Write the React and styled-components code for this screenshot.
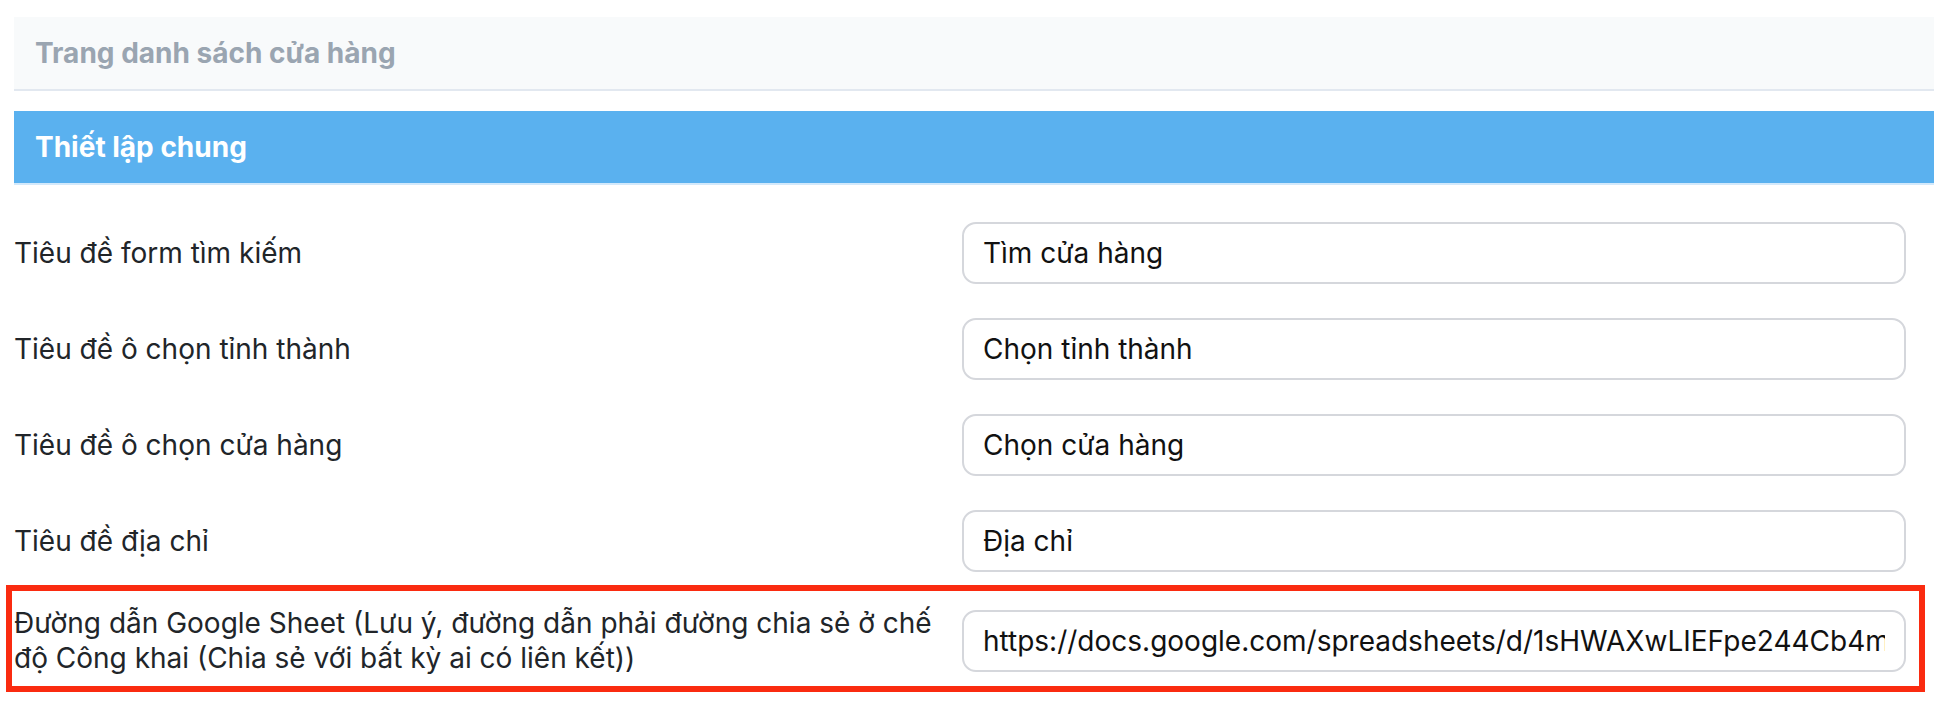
import styled, { createGlobalStyle } from 'styled-components';

const GlobalStyle = createGlobalStyle`
  body {
    margin: 0;
    background: #ffffff;
    font-family: Inter, "Noto Sans", sans-serif;
  }
`;

const Page = styled.div`
  padding: 17px 0 0 14px;
`;

const Band = styled.div`
  display: flex;
  align-items: center;
  height: 72px;
  padding: 0 21px;
  margin-top: ${props => (props.$first ? '0' : '20px')};
  background: ${props => props.$bg};
  border-bottom: 2px solid ${props => props.$line};
  color: ${props => props.$color};
  font-size: 28px;
  font-weight: 700;
  line-height: 35px;
`;

const Form = styled.div`
  display: flex;
  flex-direction: column;
  padding: 20px 28px 0 0;
`;

const Row = styled.div`
  position: relative;
  display: grid;
  grid-template-columns: 948px 1fr;
  align-items: center;
  padding: 17px 0;

  ${props => props.$marked && `
    &::after {
      content: '';
      position: absolute;
      top: -4px;
      left: -8px;
      right: -19px;
      bottom: 1px;
      border: 6px solid #fa2b10;
      pointer-events: none;
    }
  `}
`;

const Label = styled.label`
  font-size: 28px;
  line-height: 35px;
  color: #212529;
  padding-right: 6px;
`;

const TextInput = styled.input`
  box-sizing: border-box;
  width: 100%;
  height: 62px;
  padding: 0 19px;
  border: 2px solid #d5d7dc;
  border-radius: 14px;
  background: #ffffff;
  font-family: Inter, "Noto Sans", sans-serif;
  font-size: 28px;
  color: #111111;
  outline: none;
`;

const fields = [
  { label: 'Tiêu đề form tìm kiếm', value: 'Tìm cửa hàng' },
  { label: 'Tiêu đề ô chọn tỉnh thành', value: 'Chọn tỉnh thành' },
  { label: 'Tiêu đề ô chọn cửa hàng', value: 'Chọn cửa hàng' },
  { label: 'Tiêu đề địa chỉ', value: 'Địa chỉ' },
  {
    label: 'Đường dẫn Google Sheet (Lưu ý, đường dẫn phải đường chia sẻ ở chế độ Công khai (Chia sẻ với bất kỳ ai có liên kết))',
    value: 'https://docs.google.com/spreadsheets/d/1sHWAXwLIEFpe244Cb4mQkT7vRz0/edit?usp=sharing',
    marked: true,
  },
];

export default function App() {
  return (
    <>
      <GlobalStyle />
      <Page>
        <Band $first $bg="#f8fafb" $line="#e2e8f0" $color="#9aa5b1">
          Trang danh sách cửa hàng
        </Band>
        <Band $bg="#5ab1ef" $line="#d3e9fb" $color="#ffffff">
          Thiết lập chung
        </Band>
        <Form>
          {fields.map(field => (
            <Row key={field.label} $marked={field.marked}>
              <Label>{field.label}</Label>
              <TextInput type="text" defaultValue={field.value} readOnly />
            </Row>
          ))}
        </Form>
      </Page>
    </>
  );
}
